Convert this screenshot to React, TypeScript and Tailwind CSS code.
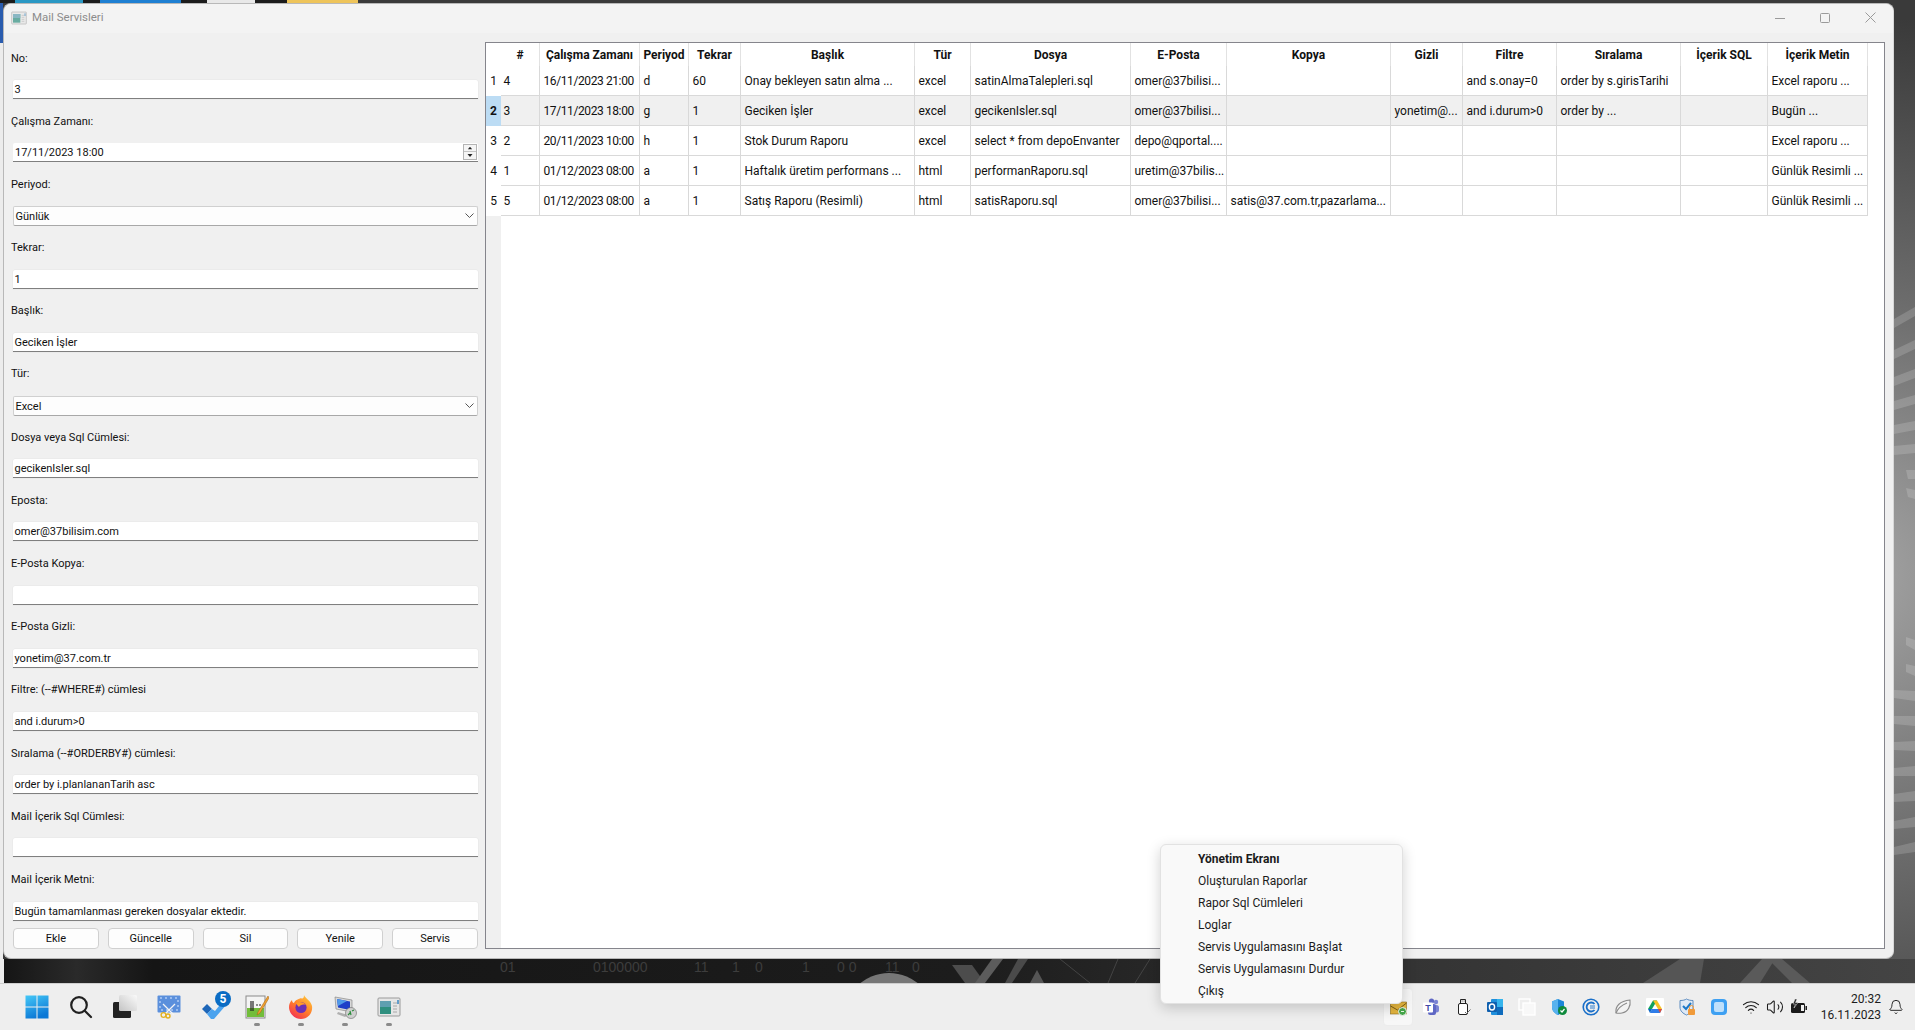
import { Bell, Volume2, Wifi } from "lucide-react";

const FIELDS = [
  { label: "No:", value: "3" },
  { label: "Çalışma Zamanı:", value: "17/11/2023 18:00", kind: "date" },
  { label: "Periyod:", value: "Günlük", kind: "combo" },
  { label: "Tekrar:", value: "1" },
  { label: "Başlık:", value: "Geciken İşler" },
  { label: "Tür:", value: "Excel", kind: "combo" },
  { label: "Dosya veya Sql Cümlesi:", value: "gecikenIsler.sql" },
  { label: "Eposta:", value: "omer@37bilisim.com" },
  { label: "E-Posta Kopya:", value: "" },
  { label: "E-Posta Gizli:", value: "yonetim@37.com.tr" },
  { label: "Filtre: (--#WHERE#) cümlesi", value: "and i.durum>0" },
  { label: "Sıralama (--#ORDERBY#) cümlesi:", value: "order by i.planlananTarih asc" },
  { label: "Mail İçerik Sql Cümlesi:", value: "" },
  { label: "Mail İçerik Metni:", value: "Bugün tamamlanması gereken dosyalar ektedir." },
];

const COLUMNS = [
  { title: "#", width: "w-[39px]", cell: "pl-[2.5px]" },
  { title: "Çalışma Zamanı", width: "w-[100px]", cell: "pl-[3.5px] tracking-[-0.4px]" },
  { title: "Periyod", width: "w-[49px]", cell: "pl-[3.5px]" },
  { title: "Tekrar", width: "w-[52px]", cell: "pl-[3.5px]" },
  { title: "Başlık", width: "w-[174px]", cell: "pl-[3.5px]" },
  { title: "Tür", width: "w-[56px]", cell: "pl-[3.5px]" },
  { title: "Dosya", width: "w-[160px]", cell: "pl-[3.5px]" },
  { title: "E-Posta", width: "w-[96px]", cell: "pl-[3.5px]" },
  { title: "Kopya", width: "w-[164px]", cell: "pl-[3.5px]" },
  { title: "Gizli", width: "w-[72px]", cell: "pl-[3.5px]" },
  { title: "Filtre", width: "w-[94px]", cell: "pl-[3.5px]" },
  { title: "Sıralama", width: "w-[124px]", cell: "pl-[3.5px]" },
  { title: "İçerik SQL", width: "w-[87px]", cell: "pl-[3.5px]" },
  { title: "İçerik Metin", width: "w-[100px]", cell: "pl-[3.5px]" },
];

const ROWS = [
  ["4", "16/11/2023 21:00", "d", "60", "Onay bekleyen satın alma ...", "excel", "satinAlmaTalepleri.sql", "omer@37bilisi...", "", "", "and s.onay=0", "order by s.girisTarihi", "", "Excel raporu ..."],
  ["3", "17/11/2023 18:00", "g", "1", "Geciken İşler", "excel", "gecikenIsler.sql", "omer@37bilisi...", "", "yonetim@...", "and i.durum>0", "order by ...", "", "Bugün ..."],
  ["2", "20/11/2023 10:00", "h", "1", "Stok Durum Raporu", "excel", "select * from depoEnvanter", "depo@qportal....", "", "", "", "", "", "Excel raporu ..."],
  ["1", "01/12/2023 08:00", "a", "1", "Haftalık üretim performans ...", "html", "performanRaporu.sql", "uretim@37bilis...", "", "", "", "", "", "Günlük Resimli ..."],
  ["5", "01/12/2023 08:00", "a", "1", "Satış Raporu (Resimli)", "html", "satisRaporu.sql", "omer@37bilisi...", "satis@37.com.tr,pazarlama...", "", "", "", "", "Günlük Resimli ..."],
];

const BUTTONS = ["Ekle", "Güncelle", "Sil", "Yenile", "Servis"];

const MENU = ["Yönetim Ekranı", "Oluşturulan Raporlar", "Rapor Sql Cümleleri", "Loglar", "Servis Uygulamasını Başlat", "Servis Uygulamasını Durdur", "Çıkış"];

const UPPER_SPOKES = [311, 343, 371, 396, 421, 443, 468, 487];
const LOWER_SPOKES = [641, 667, 692, 717, 742, 767, 792, 818, 843];

const DIGITS: [number, string][] = [[500, "01"], [593, "0100000"], [694, "11"], [732, "1"], [755, "0"], [802, "1"], [837, "0 0"], [885, "11"], [912, "0"]];

function Wallpaper() {
  return (
    <svg className="absolute left-0 top-0" width="1915" height="983" viewBox="0 0 1915 983">
      <defs>
        <radialGradient id="glow" gradientUnits="userSpaceOnUse" cx="1840" cy="575" r="560">
          <stop offset="0" stopColor="#a8a8a8" />
          <stop offset="0.5" stopColor="#6c6c6c" />
          <stop offset="1" stopColor="#3a3a3a" />
        </radialGradient>
        <linearGradient id="band" x1="0" x2="1" y1="0" y2="0">
          <stop offset="0" stopColor="#141414" />
          <stop offset="0.04" stopColor="#2a2a2a" />
          <stop offset="0.08" stopColor="#151515" />
          <stop offset="0.5" stopColor="#1c1c1c" />
          <stop offset="0.72" stopColor="#333333" />
          <stop offset="1" stopColor="#444444" />
        </linearGradient>
      </defs>
      <rect width="1915" height="983" fill="url(#glow)" />
      <rect y="959" width="1915" height="24" fill="url(#band)" />
      {UPPER_SPOKES.map((y, i) => (
        <polygon key={y} points={`${i > 5 ? 1906 : 1894},${y + 8 - i} 1915,${y - 4 + i} 1915,${y + 5 + i} ${i > 5 ? 1908 : 1894},${y + 17 - i}`} fill="#ffffff" fillOpacity="0.16" />
      ))}
      {LOWER_SPOKES.map((y, i) => (
        <polygon key={y} points={`${i < 2 ? 1906 : 1894},${y + i - 4} 1915,${y - 1} 1915,${y + 9} ${i < 2 ? 1906 : 1894},${y + i + 4}`} fill="#ffffff" fillOpacity="0.16" />
      ))}
      {DIGITS.map(([x, d]) => (
        <text key={x} x={x} y="972" fill="#3d3d3d" fontSize="14" fontFamily="Liberation Sans">
          {d}
        </text>
      ))}
      <circle cx="889" cy="1019" r="46" fill="#777777" />
      <polygon points="952,965 972,965 985,983 965,983" fill="#4c4c4c" />
      <polygon points="975,983 992,959 1003,959 985,983" fill="#5c5c5c" />
      <polygon points="1005,983 1018,959 1028,959 1012,983" fill="#4a4a4a" />
      <polygon points="1030,983 1037,970 1044,983" fill="#555555" />
      <path d="M1060 959 L1090 983 M1118 959 L1108 983 M1150 959 L1135 983" stroke="#444444" fill="none" />
      <polygon points="1643,983 1680,959 1704,959 1700,983" fill="#555555" />
      <polygon points="1740,983 1762,959 1775,959 1760,983" fill="#5a5a5a" />
      <polygon points="1768,959 1782,959 1810,983 1792,983" fill="#5a5a5a" />
    </svg>
  );
}

function AppIcon({ size }: { size: number }) {
  return (
    <svg width={size} height={size} viewBox="0 0 24 24">
      <rect x="1" y="3" width="22" height="18" rx="1" fill="#e6e6e6" stroke="#9a9a9a" />
      <rect x="3" y="6" width="11" height="13" fill="#2f8f7f" />
      <rect x="3" y="6" width="11" height="6" fill="#5f9fb0" />
      <path d="M16 8h4M16 11h4M16 14h4M16 17h4" stroke="#a8a8a8" />
      <path d="M21 5v4" stroke="#2a7fc0" strokeWidth="1.4" />
    </svg>
  );
}

function StartIcon() {
  return (
    <svg width="24" height="24" viewBox="0 0 24 24">
      <defs>
        <linearGradient id="win" x1="0" x2="0.4" y1="0" y2="1">
          <stop offset="0" stopColor="#45c8f7" />
          <stop offset="1" stopColor="#0b78d6" />
        </linearGradient>
      </defs>
      <path d="M0.5 0.5h11v11h-11zM12.5 0.5h11v11h-11zM0.5 12.5h11v11h-11zM12.5 12.5h11v11h-11z" fill="url(#win)" />
    </svg>
  );
}

function SearchIcon() {
  return (
    <svg width="24" height="24" viewBox="0 0 24 24" fill="none" stroke="#202020" strokeWidth="2.2" strokeLinecap="round">
      <circle cx="10" cy="10" r="7.8" />
      <path d="M16 16l6 6" />
    </svg>
  );
}

function TaskViewIcon() {
  return (
    <svg width="24" height="24" viewBox="0 0 24 24">
      <defs>
        <linearGradient id="tv" x1="1" x2="0" y1="0" y2="1">
          <stop offset="0" stopColor="#fafafa" />
          <stop offset="1" stopColor="#c4c4c4" />
        </linearGradient>
      </defs>
      <rect x="0" y="7" width="18" height="16" rx="1.5" fill="#222222" />
      <rect x="6" y="0" width="18" height="16" rx="1.5" fill="url(#tv)" />
    </svg>
  );
}

function SnipIcon() {
  return (
    <svg width="24" height="24" viewBox="0 0 24 24">
      <rect x="0.5" y="0.5" width="23" height="17" rx="1" fill="#5a8fdc" />
      <path d="M3 3h18v12H3z" fill="none" stroke="#d8e8ff" strokeDasharray="2 3" />
      <path d="M7 20l11-11M17 20L6 9" stroke="#f4f4f4" strokeWidth="1.3" />
      <circle cx="6.5" cy="20" r="2.4" fill="none" stroke="#e3b020" strokeWidth="1.4" />
      <circle cx="11" cy="21" r="2" fill="none" stroke="#e3b020" strokeWidth="1.4" />
    </svg>
  );
}

function TodoIcon() {
  return (
    <svg width="24" height="24" viewBox="0 0 24 24">
      <polygon points="1,14 6,9 11,14 6,19" fill="#1d66b8" />
      <polygon points="6,19 11,14 14,16 22,6 25,10 13,24 10,24" fill="#4ba3ee" />
    </svg>
  );
}

function NotepadIcon() {
  return (
    <svg width="24" height="24" viewBox="0 0 24 24">
      <rect x="1" y="1" width="19" height="22" fill="#f4f4f4" stroke="#8a8a8a" />
      <rect x="2" y="13" width="17" height="9" fill="#72bd3a" />
      <path d="M6 6v10M8 6v10M11 10h2M14 10h2" stroke="#222222" strokeWidth="1.2" />
      <path d="M23 1L13 17l-1 3 3-2L24 3z" fill="#f0a030" stroke="#a06010" strokeWidth="0.5" />
    </svg>
  );
}

function FirefoxIcon() {
  return (
    <svg width="24" height="24" viewBox="0 0 24 24">
      <defs>
        <linearGradient id="fox" x1="0.8" x2="0.1" y1="0" y2="1">
          <stop offset="0" stopColor="#ffc83a" />
          <stop offset="0.5" stopColor="#ff7a2a" />
          <stop offset="1" stopColor="#f0245c" />
        </linearGradient>
      </defs>
      <path d="M15 0c1 3 7 6 8 11 1 7-4 13-11 13S0 18 0 12c0-3 1-5 3-7 0 2 1 3 2 3 1-3 5-4 7-5 1 1 3 1 3-3z" fill="url(#fox)" />
      <circle cx="12" cy="12.5" r="5.6" fill="#6b2fb5" />
      <path d="M7 8c3-2 8-1 10 2-3-1-6 0-7 2-1-1-2-2-3-4z" fill="#ff9a2a" />
    </svg>
  );
}

function RdpIcon() {
  return (
    <svg width="24" height="24" viewBox="0 0 24 24">
      <polygon points="2,2 19,5 19,17 3,14" fill="#d8d8d8" stroke="#7a7a7a" strokeWidth="0.6" />
      <polygon points="4,4 17,6.5 17,15 5,12.5" fill="#1f3fc8" />
      <polygon points="4,4 14,6 5,11" fill="#4f9ae8" />
      <path d="M5 17l10 3-3 2-8-3z" fill="#b0b0b0" />
      <circle cx="18" cy="18" r="5.5" fill="#cfcfcf" stroke="#6a6a6a" strokeWidth="0.6" />
      <path d="M15 20l2-2M19 16l2-1M17 16l1 4" stroke="#2c8c3c" strokeWidth="1.2" />
    </svg>
  );
}

function MailTrayIcon() {
  return (
    <svg width="17" height="17" viewBox="0 0 17 17">
      <rect x="0.500" y="3" width="16" height="12" fill="#e4b53e" stroke="#8a6a1a" strokeWidth="0.6" />
      <path d="M0.500 7l7 4 9-7" fill="none" stroke="#6e5210" strokeWidth="0.9" />
      <circle cx="12.500" cy="12.500" r="4" fill="#46a84a" stroke="#f4f4f4" />
      <path d="M11 12.500h3" stroke="#e8f8e8" />
    </svg>
  );
}

function TeamsIcon() {
  return (
    <svg width="18" height="18" viewBox="0 0 18 18">
      <circle cx="14" cy="4" r="2.2" fill="#7b83d3" />
      <circle cx="9.5" cy="3" r="2.6" fill="#5f67c4" />
      <rect x="11" y="7" width="6" height="7.5" rx="2.5" fill="#7b83d3" />
      <rect x="6" y="6" width="8" height="11" rx="2" fill="#5f67c4" />
      <rect x="1" y="4.5" width="10" height="10" rx="1" fill="#ffffff" />
      <text x="6" y="12.8" textAnchor="middle" fontSize="9" fontWeight="700" fill="#3f48a8" fontFamily="Liberation Sans">T</text>
    </svg>
  );
}

function UsbIcon() {
  return (
    <svg width="18" height="18" viewBox="0 0 18 18" fill="none" stroke="#222222">
      <path d="M6.5 1.5h5v4h-5z" />
      <path d="M7.8 3h.6M9.8 3h.6" />
      <rect x="4.5" y="5.5" width="9" height="11" rx="1.5" fill="#ffffff" />
      <path d="M11 14l1.5 1.5L16.5 11.5" stroke="#666666" />
    </svg>
  );
}

function OutlookIcon() {
  return (
    <svg width="18" height="18" viewBox="0 0 18 18">
      <rect x="5" y="1" width="12" height="16" rx="1" fill="#1e8fdc" />
      <rect x="11" y="1" width="6" height="8" fill="#36b4ec" />
      <rect x="11" y="9" width="6" height="8" fill="#0f6cbd" />
      <rect x="1" y="4" width="10" height="10" rx="1" fill="#0f5fae" />
      <ellipse cx="6" cy="9" rx="2.6" ry="3" fill="none" stroke="#ffffff" strokeWidth="1.4" />
    </svg>
  );
}

function CopyIcon() {
  return (
    <svg width="18" height="18" viewBox="0 0 18 18" fill="none" strokeWidth="1.4">
      <rect x="1" y="1" width="11" height="11" stroke="#ffffff" />
      <rect x="5" y="5" width="12" height="12" fill="#f8f8f8" stroke="#ffffff" />
    </svg>
  );
}

function ShieldCheckIcon() {
  return (
    <svg width="18" height="18" viewBox="0 0 18 18">
      <path d="M8 1l6 2.5V9c0 4-3 6.5-6 8-3-1.5-6-4-6-8V3.500z" fill="#1b86d8" />
      <path d="M8 1v16c-3-1.500-6-4-6-8V3.500z" fill="#57b2ee" />
      <circle cx="12.5" cy="12.500" r="4.500" fill="#0e8a3c" />
      <path d="M10.500 12.500l1.500 1.500 2.500-3" stroke="#ffffff" strokeWidth="1.200" fill="none" />
    </svg>
  );
}

function CLogoIcon() {
  return (
    <svg width="18" height="18" viewBox="0 0 18 18" fill="none" stroke="#1a6fc8">
      <circle cx="9" cy="9" r="7.800" strokeWidth="1.600" />
      <path d="M12.500 6a4.500 4.500 0 1 0 0 6" strokeWidth="1.800" />
      <path d="M8 8h5M8 10h5" strokeWidth="0.900" />
    </svg>
  );
}

function LeafIcon() {
  return (
    <svg width="18" height="18" viewBox="0 0 18 18" fill="#f2f2f2" stroke="#8a8a8a" strokeWidth="1.100">
      <path d="M2 15C1 8 6 3 16 2c1 6-2 12-8 13-2 .300-4 .300-6 0z" />
      <path d="M2 15c2-5 6-8 11-10" fill="none" />
    </svg>
  );
}

function DriveIcon() {
  return (
    <svg width="18" height="18" viewBox="0 0 18 18">
      <rect width="18" height="18" rx="1" fill="#ffffff" />
      <polygon points="7,2.500 11,2.500 6,11 2,11" fill="#12a25a" />
      <polygon points="11,2.500 16,11 12,11 7,2.500" fill="#f7c224" />
      <polygon points="6,11 16,11 14,15 4,15" fill="#2f7de8" />
      <polygon points="2,11 6,11 4,15" fill="#0b66c8" />
      <polygon points="12,11 16,11 14,15" fill="#e24b36" />
    </svg>
  );
}

function ShieldLockIcon() {
  return (
    <svg width="18" height="18" viewBox="0 0 18 18">
      <path d="M2 2.500c3 0 5-.500 6.500-1.500 1.500 1 4 1.500 6.500 1.500V9c0 4-3 6.500-6.500 8C5 15.500 2 13 2 9z" fill="#dfe9f5" stroke="#5c8cc0" />
      <path d="M5 8l3 3 5-6" stroke="#1c78c8" strokeWidth="2" fill="none" />
      <rect x="10" y="11" width="7" height="6" rx="1" fill="#f09a3a" />
      <path d="M11.500 11V9.500a2 2 0 0 1 4 0V11" stroke="#f09a3a" fill="none" />
    </svg>
  );
}

function BlueSquareIcon() {
  return (
    <svg width="18" height="18" viewBox="0 0 18 18">
      <rect x="1" y="1" width="16" height="16" rx="4" fill="#3ea0f2" />
      <rect x="4" y="4" width="10" height="10" rx="2" fill="#bfe0fb" />
    </svg>
  );
}

function BatteryIcon() {
  return (
    <svg width="18" height="18" viewBox="0 0 18 18">
      <rect x="1" y="5" width="14" height="10" rx="1.500" fill="#1a1a1a" />
      <rect x="11" y="7" width="3" height="6" fill="#f0f0f0" />
      <path d="M15.500 8v4h1.500V8z" fill="#1a1a1a" />
      <path d="M5 1L3 6h2.500L4 10l4-5.500H5.500L7 1z" fill="#1a1a1a" stroke="#eeeeee" strokeWidth="0.500" />
    </svg>
  );
}

function Input({ value }: { value: string }) {
  return (
    <div className="flex h-[19px] items-center rounded-t-[2px] border-b border-[#7f7f7f] bg-white pl-[1.5px] pt-[1px] shadow-[0_0_0_0.5px_#e6e6e6]">
      {value}
    </div>
  );
}

function DateInput({ value }: { value: string }) {
  return (
    <div className="flex h-[19px] items-center justify-between rounded-t-[2px] border-b border-[#7f7f7f] bg-white pl-[2px] pr-[1px]">
      <span className="pt-[1px]">{value}</span>
      <div className="flex h-[16px] w-[14px] flex-col border border-[#b4b4b4] bg-[#f5f5f5]">
        <svg width="12" height="7" viewBox="0 0 12 7" className="border-b border-[#c4c4c4]">
          <path d="M3.500 5h5L6 2z" fill="#222222" />
        </svg>
        <svg width="12" height="7" viewBox="0 0 12 7">
          <path d="M3.500 2h5L6 5z" fill="#222222" />
        </svg>
      </div>
    </div>
  );
}

function Combo({ value }: { value: string }) {
  return (
    <div className="-my-[0.5px] flex h-[20px] items-center justify-between rounded-[2px] border border-[#d0d0d0] border-b-[#a8a8a8] bg-[#fdfdfd] pl-[1.5px] pr-[3px]">
      <span className="pt-[1px]">{value}</span>
      <svg width="9" height="5" viewBox="0 0 9 5" fill="none" stroke="#555555">
        <path d="M0.500 0.500L4.500 4.500L8.500 0.500" />
      </svg>
    </div>
  );
}

function FormPanel() {
  return (
    <div className="ml-[9px] mt-[15.5px] flex w-[465px] flex-col text-[11px]">
      <div className="flex flex-col gap-[12.6px]">
        {FIELDS.map((f) => (
          <div key={f.label} className="flex flex-col gap-[12.6px]">
            <div className="-ml-[2px] flex h-[19px] items-center">{f.label}</div>
            {f.kind === "date" ? <DateInput value={f.value} /> : f.kind === "combo" ? <Combo value={f.value} /> : <Input value={f.value} />}
          </div>
        ))}
      </div>
      <div className="mt-[7px] flex gap-[9px]">
        {BUTTONS.map((b) => (
          <div key={b} className="flex h-[21px] flex-1 items-center justify-center rounded-[4px] border border-[#d0d0d0] bg-[#fdfdfd]">
            {b}
          </div>
        ))}
      </div>
    </div>
  );
}

function TablePanel() {
  return (
    <div className="ml-[7px] mt-[9px] flex h-[907px] w-[1400px] border border-[#85858c] bg-white">
      <div className="flex w-[15px] flex-col">
        <div className="h-[23px]" />
        {ROWS.map((_, i) => (
          <div key={i} className={i === 1 ? "flex h-[30px] items-center justify-center bg-[#bcdcf4] font-bold" : "flex h-[30px] items-center justify-center"}>
            {i + 1}
          </div>
        ))}
        <div className="flex-1 bg-[#f0f0f0]" />
      </div>
      <div className="flex flex-col">
        <div className="flex h-[23px]">
          {COLUMNS.map((c) => (
            <div key={c.title} className={`${c.width} flex items-center justify-center border-r border-[#e2e2e2] font-bold`}>
              {c.title}
            </div>
          ))}
        </div>
        {ROWS.map((row, r) => (
          <div key={r} className={r === 1 ? "flex h-[30px] bg-[#f0f0f0]" : "flex h-[30px]"}>
            {row.map((cell, c) => (
              <div key={c} className={`${COLUMNS[c].width} ${COLUMNS[c].cell} flex items-center overflow-hidden whitespace-nowrap border-b border-r border-[#d9d9d9]`}>
                {cell}
              </div>
            ))}
          </div>
        ))}
      </div>
    </div>
  );
}

function TitleBar() {
  return (
    <div className="flex h-[29px] items-center bg-[#f3f3f3] pb-[2px]">
      <div className="ml-[7px] opacity-70">
        <AppIcon size={16} />
      </div>
      <span className="ml-[5px] text-[11.5px] text-[#8c8c8c]">Mail Servisleri</span>
      <div className="ml-auto mr-[17px] flex items-center gap-[35px]">
        <svg width="10" height="10" viewBox="0 0 10 10" stroke="#9a9a9a">
          <path d="M0 5.500h10" />
        </svg>
        <svg width="10" height="10" viewBox="0 0 10 10" fill="none" stroke="#9a9a9a">
          <rect x="0.500" y="0.500" width="9" height="9" rx="1" />
        </svg>
        <svg width="11" height="11" viewBox="0 0 11 11" stroke="#9a9a9a">
          <path d="M0.500 0.500l10 10M10.500 0.500l-10 10" />
        </svg>
      </div>
    </div>
  );
}

function Taskbar() {
  const pinned = [
    { icon: <StartIcon /> },
    { icon: <SearchIcon /> },
    { icon: <TaskViewIcon /> },
    { icon: <SnipIcon /> },
    { icon: <TodoIcon />, badge: "5" },
    { icon: <NotepadIcon />, open: true },
    { icon: <FirefoxIcon />, open: true },
    { icon: <RdpIcon />, open: true },
    { icon: <AppIcon size={24} />, open: true },
  ];
  const tray = [<TeamsIcon />, <UsbIcon />, <OutlookIcon />, <CopyIcon />, <ShieldCheckIcon />, <CLogoIcon />, <LeafIcon />, <DriveIcon />, <ShieldLockIcon />, <BlueSquareIcon />];
  return (
    <div className="relative flex h-[47px] items-center border-t border-[#cfcfcf] bg-[#eeeeee] text-[#1c1c1c]">
      <div className="flex pl-[15px]">
        {pinned.map((p, i) => (
          <div key={i} className="relative flex h-[46px] w-[44px] items-center justify-center">
            {p.icon}
            {p.badge && (
              <span className="absolute left-[24px] top-[7px] flex h-[16px] w-[16px] items-center justify-center rounded-full bg-[#0a6cc4] text-[12px] font-bold text-white">
                {p.badge}
              </span>
            )}
            {p.open && <span className="absolute bottom-[4px] h-[3px] w-[6px] rounded-full bg-[#8a8a8a]" />}
          </div>
        ))}
      </div>
      <div className="ml-auto mr-[9px] flex items-center">
        <div className="mr-[2px] flex h-[38px] w-[30px] items-center justify-center rounded-[4px] border border-[#ececec] bg-[#f7f7f7]">
          <MailTrayIcon />
        </div>
        {tray.map((t, i) => (
          <div key={i} className="flex w-[32px] justify-center">
            {t}
          </div>
        ))}
        <div className="ml-[4px] flex w-[24px] justify-center">
          <Wifi size={18} strokeWidth={1.600} />
        </div>
        <div className="flex w-[24px] justify-center">
          <Volume2 size={18} strokeWidth={1.400} />
        </div>
        <div className="flex w-[24px] justify-center">
          <BatteryIcon />
        </div>
        <div className="w-[70px] text-right leading-[16px]">
          <div>20:32</div>
          <div>16.11.2023</div>
        </div>
        <div className="ml-[5px] flex w-[20px] justify-center">
          <Bell size={16} strokeWidth={1.400} />
        </div>
      </div>
      <div className="absolute left-[1160px] top-[-140px] h-[160px] w-[243px] rounded-[6px] border border-[#e2e2e2] bg-[#f9f9f9] pl-[37px] pt-[3px] shadow-[0_4px_14px_rgba(0,0,0,0.18)]">
        {MENU.map((m, i) => (
          <div key={m} className={i === 0 ? "flex h-[22px] items-center font-bold" : "flex h-[22px] items-center"}>
            {m}
          </div>
        ))}
      </div>
    </div>
  );
}

export default function App() {
  return (
    <div className="relative h-[1030px] w-[1915px] overflow-hidden bg-[#222222] font-[Roboto,sans-serif] text-[12px] leading-none text-[#111111]">
      <Wallpaper />
      <div className="relative flex h-[983px] flex-col">
        <div className="flex h-[3px] bg-[#1c1c1c]">
          <div className="ml-[15px] w-[68px] bg-[#2a98c4]" />
          <div className="ml-[17px] w-[81px] bg-[#1e7fd2]" />
          <div className="ml-[26px] w-[48px] bg-[#e8e8e8]" />
          <div className="ml-[32px] w-[71px] bg-[#eec45a]" />
          <div className="ml-auto w-[1557px] bg-[#3a3a3a]" />
        </div>
        <div className="flex h-[956px]">
          <div className="flex w-[3px] flex-col">
            <div className="h-[40px] bg-[#2a5cae]" />
            <div className="flex-1 bg-[#ececec]" />
          </div>
          <div className="flex w-[1891px] flex-col overflow-hidden rounded-[8px] border border-[#b8b8b8] border-r-[#d8d8d8] bg-[#f0f0f0]">
            <TitleBar />
            <div className="flex">
              <FormPanel />
              <TablePanel />
            </div>
          </div>
        </div>
        <div className="absolute bottom-0 left-0 h-[24px] w-[4px] bg-[#ececec]" />
      </div>
      <Taskbar />
    </div>
  );
}
